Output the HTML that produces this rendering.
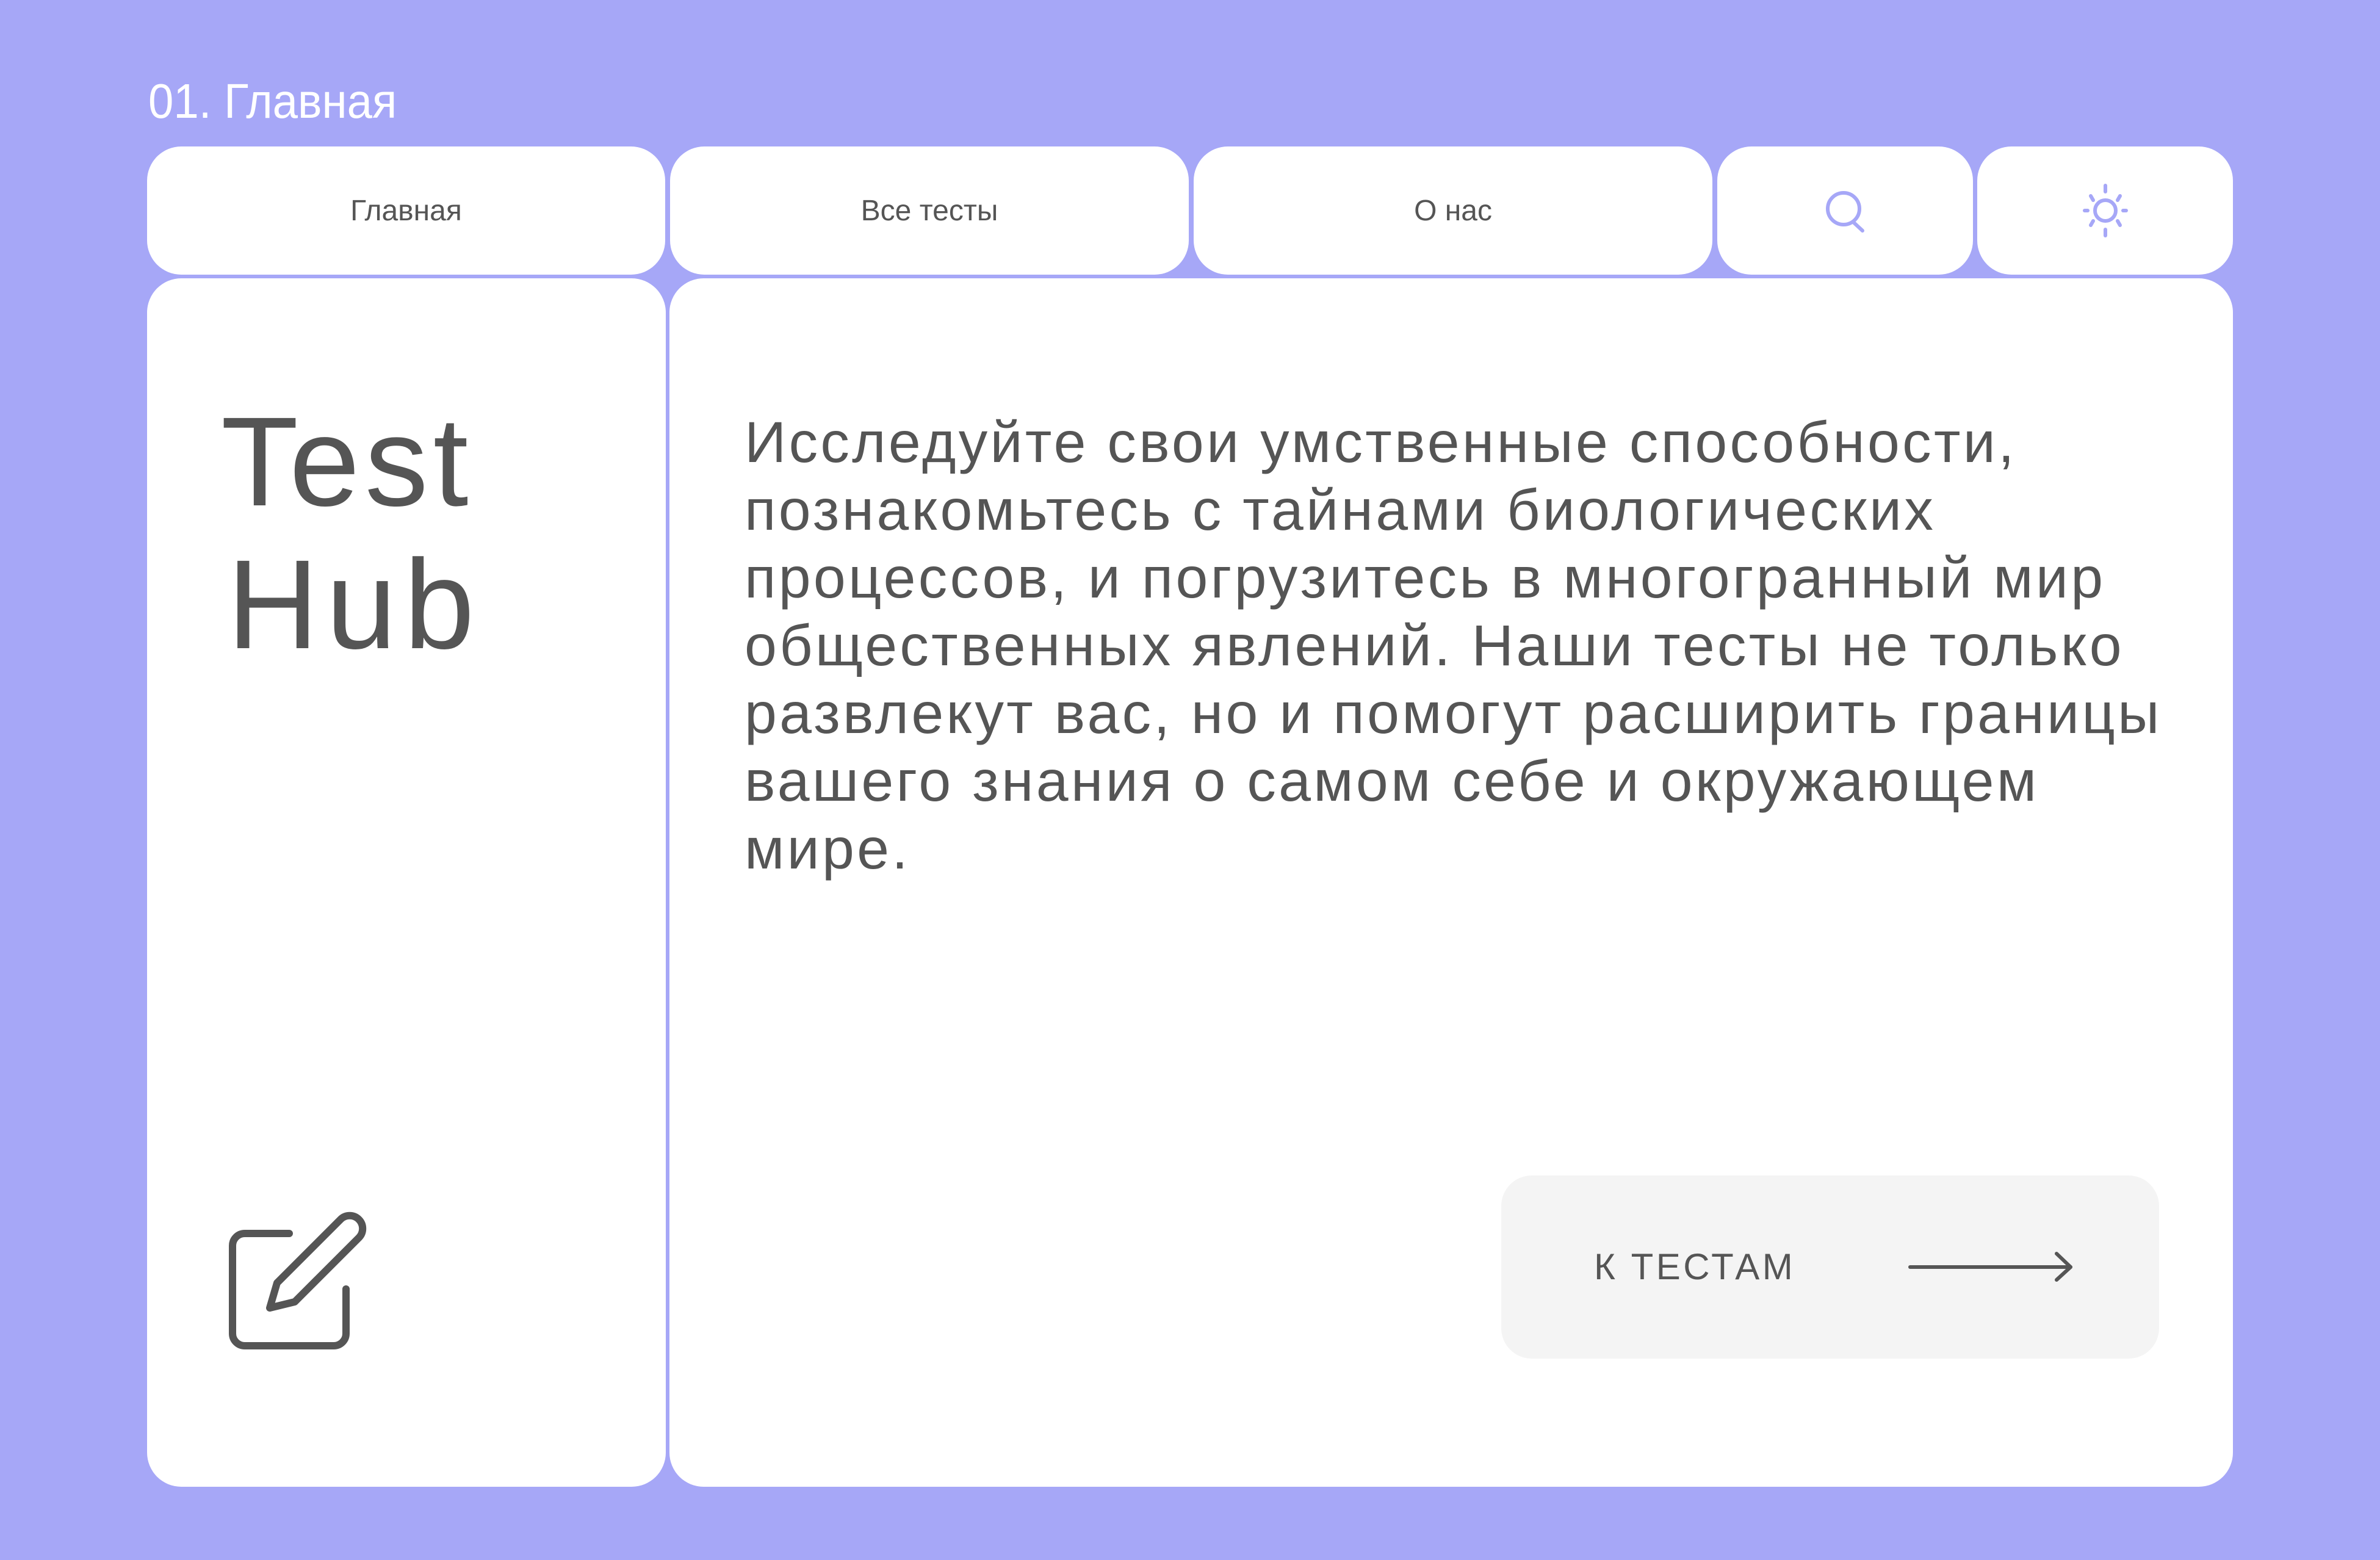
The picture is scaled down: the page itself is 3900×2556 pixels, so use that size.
<!DOCTYPE html>
<html><head><meta charset="utf-8"><style>
*{margin:0;padding:0;box-sizing:border-box}
html,body{width:3900px;height:2556px;overflow:hidden;background:#a6a7f7;font-family:"Liberation Sans",sans-serif;color:#555}
.a{position:absolute}
.box{position:absolute;background:#fff;border-radius:56px}
.nav{display:flex;align-items:center;justify-content:center;font-size:48px;color:#555}
</style></head><body>
<div class="a" style="left:243px;top:126px;font-size:80px;color:#fff;line-height:1;transform:scaleX(0.93);transform-origin:left">01. Главная</div>

<div class="box nav" style="left:241px;top:240px;width:849px;height:210px">Главная</div>
<div class="box nav" style="left:1098px;top:240px;width:850px;height:210px">Все тесты</div>
<div class="box nav" style="left:1956px;top:240px;width:850px;height:210px">О нас</div>
<div class="box" style="left:2814px;top:240px;width:419px;height:210px"></div>
<div class="box" style="left:3240px;top:240px;width:419px;height:210px"></div>

<svg class="a" style="left:0;top:0" width="3900" height="500">
<g fill="none" stroke="#a6a7f7" stroke-width="6" stroke-linecap="round">
<circle cx="3021" cy="342" r="26"/>
<line x1="3037" y1="364" x2="3052" y2="378"/>
<circle cx="3450" cy="345" r="17"/>
<line x1="3450" y1="304" x2="3450" y2="314"/>
<line x1="3450" y1="376" x2="3450" y2="386"/>
<line x1="3416" y1="345" x2="3421" y2="345"/>
<line x1="3479" y1="345" x2="3484" y2="345"/>
<line x1="3426" y1="321" x2="3430" y2="328"/>
<line x1="3474" y1="321" x2="3470" y2="328"/>
<line x1="3426" y1="369" x2="3430" y2="362"/>
<line x1="3474" y1="369" x2="3470" y2="362"/>
</g></svg>

<div class="box" style="left:241px;top:456px;width:850px;height:1980px"></div>
<div class="box" style="left:1097px;top:456px;width:2562px;height:1980px"></div>

<div class="a" style="left:362px;top:640px;font-size:208px;line-height:234px;letter-spacing:8px;color:#555">Test</div>
<div class="a" style="left:372px;top:874px;font-size:208px;line-height:234px;letter-spacing:12px;color:#555">Hub</div>

<div class="a" style="left:1220px;top:670px;font-size:95px;line-height:111px;letter-spacing:4.3px;color:#555;white-space:nowrap">Исследуйте свои умственные способности,<br>познакомьтесь с тайнами биологических<br>процессов, и погрузитесь в многогранный мир<br>общественных явлений. Наши тесты не только<br>развлекут вас, но и помогут расширить границы<br>вашего знания о самом себе и окружающем<br>мире.</div>

<svg class="a" style="left:0;top:1900px" width="800" height="400">
<g fill="none" stroke="#555" stroke-width="12" stroke-linecap="round" stroke-linejoin="round">
<path d="M474,121 H401 a20,20 0 0 0 -20,20 V285 a20,20 0 0 0 20,20 H547 a20,20 0 0 0 20,-20 V212"/>
<path d="M454,202 L558,98 a21,21 0 0 1 30,30 L483,233 L442,243 Z"/>
</g></svg>

<div class="a" style="left:2460px;top:1926px;width:1078px;height:300px;background:#f4f4f4;border-radius:50px"></div>
<div class="a" style="left:2612px;top:2040px;font-size:60px;line-height:72px;color:#555;letter-spacing:4.5px">К ТЕСТАМ</div>
<svg class="a" style="left:3100px;top:2040px" width="320" height="80">
<g fill="none" stroke="#555" stroke-width="6" stroke-linecap="round" stroke-linejoin="round">
<line x1="30" y1="36" x2="293" y2="36"/>
<path d="M270,14 L293,36 L270,57"/>
</g></svg>
</body></html>
